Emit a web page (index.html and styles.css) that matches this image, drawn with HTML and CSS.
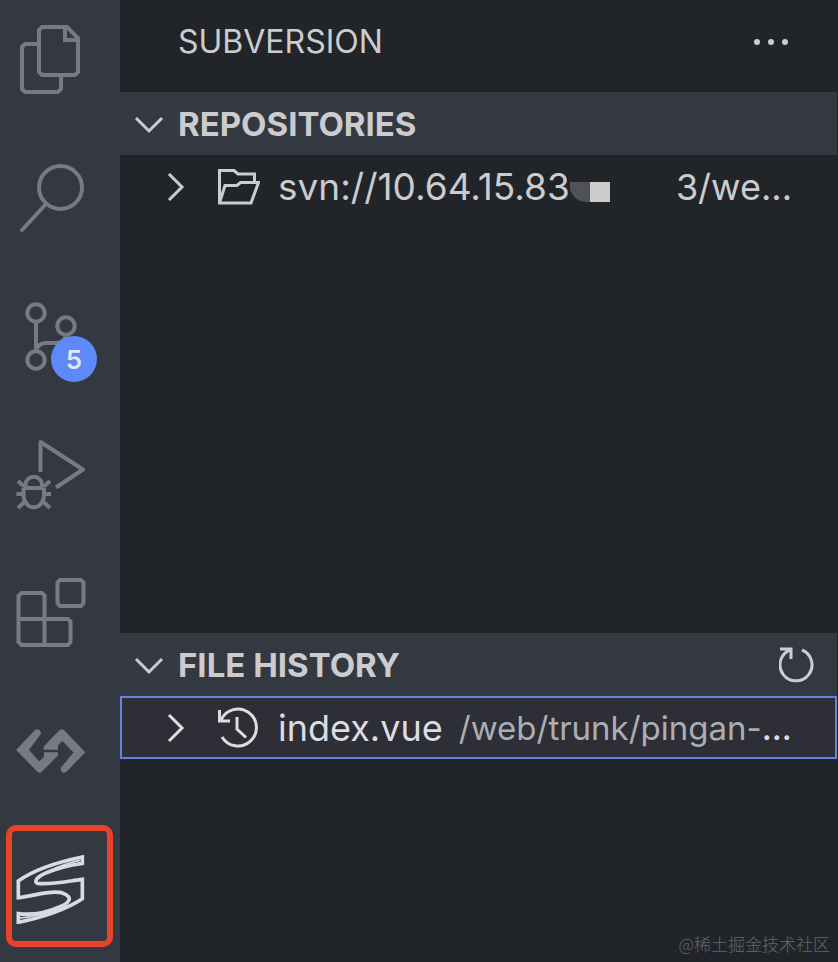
FILE: index.html
```
<!DOCTYPE html>
<html lang="en">
<head>
  <meta charset="UTF-8" />
  <meta name="viewport" content="width=device-width, initial-scale=1.0"/>
  <title>Subversion</title>
  <link rel="stylesheet" href="styles.css">
</head>
<body>

<nav class="activity-bar">
  <button class="activity" aria-label="Explorer">
    <svg viewBox="0 0 72 72">
      <path d="M28 3H53L64 14V48L61 51H28L25 48V6ZM51 3V16H64"/>
      <path d="M25 20H11L8 23V65L11 68H44L47 65V51"/>
    </svg>
  </button>
  <button class="activity" aria-label="Search">
    <svg viewBox="0 0 72 72">
      <circle cx="46.5" cy="25.5" r="21.5"/>
      <path d="M32 42L8 68" stroke-linecap="round"/>
    </svg>
  </button>
  <button class="activity" aria-label="Source Control">
    <svg viewBox="0 0 72 72">
      <circle cx="22" cy="13" r="8.7"/>
      <circle cx="52" cy="26" r="8.7"/>
      <circle cx="22" cy="60" r="8.7"/>
      <path d="M22 22V51M22 50Q25 43 32 43H42Q51 43 52 35"/>
    </svg>
    <span class="badge">5</span>
  </button>
  <button class="activity" aria-label="Run and Debug">
    <svg viewBox="0 0 72 72">
      <path d="M26.5 34V4L69 31.5L42 49.5" stroke-linejoin="round"/>
      <path d="M9.5 50H30M9.5 50V57a10 12 0 0 0 20.5 0V50M11.5 50V47a8 8 0 0 1 16.5 0V50"/>
      <path d="M2.5 56H10M30 56H37M4 43L10 48.5M36 43L30 48.5M4 70L11 63.5M36 70L29 63.5"/>
    </svg>
  </button>
  <button class="activity" aria-label="Extensions">
    <svg viewBox="0 0 72 72">
      <path d="M7.5 17H28L30.5 19.5V43H54L56.5 45.5V66L54 69H7.5L4.5 66V20ZM4.5 43H30.5V69"/>
      <path d="M46 4H67L69.5 6.5V27L67 30H46L43.5 27V6.5Z"/>
    </svg>
  </button>
  <button class="activity" aria-label="Code links">
    <svg class="solid" viewBox="42 462 216 216">
      <path d="M51 570L107 511Q120 507 121 521L84 570L118 607L134 591V579H172V586L125 633Q120 640 113 633Z"/>
      <path d="M253 577L197 635Q184 640 184 625L223 577L187 540L172 555V567H133V560L179 513Q185 507 192 513Z"/>
    </svg>
  </button>
  <button class="activity active" aria-label="Subversion">
    <svg class="svn-logo" viewBox="42 126 216 216">
      <path d="M247 141C180 155 100 180 55 213V263C100 259 145 240 185 248C225 262 205 280 180 290C140 308 95 316 55 311V337C130 321 200 297 247 266V208C200 214 150 225 112 220C90 207 150 174 247 160Z"/>
      <path d="M240 151C215 157 190 164 164 175M60 324Q105 320 145 306" stroke-width="5"/>
    </svg>
  </button>
</nav>

<main class="sidebar">
  <header class="title-bar">
    <h1>SUBVERSION</h1>
    <button class="more" aria-label="More actions">
      <svg viewBox="0 0 36 8"><circle cx="4" cy="4" r="3"/><circle cx="18" cy="4" r="3"/><circle cx="32" cy="4" r="3"/></svg>
    </button>
  </header>

  <section class="repositories">
    <div class="section-header">
      <button class="toggle">
        <svg class="chevron" viewBox="0 0 48 48"><path d="M11 18L24 31L37 18"/></svg>
        <span>REPOSITORIES</span>
      </button>
    </div>
    <button class="row">
      <svg class="chevron" viewBox="0 0 48 48"><path d="M17 11L30 24L17 37"/></svg>
      <svg class="icon" viewBox="0 0 42 42">
        <path d="M1.5 37V4.500H16L20 8H36.5V16M1.5 37L7 19.5H19L22.5 16.5H40.5L33 37Z"/>
      </svg>
      <span class="url">svn://10.64.15.83</span>
      <svg class="mask" viewBox="0 0 40 30">
        <path d="M0 10H20V30H16Q5 30 0 18Z" fill="#505256"/>
        <rect x="20" y="10" width="20" height="20" fill="#cccccd"/>
      </svg>
      <span class="rest">3/we...</span>
    </button>
  </section>

  <section class="history">
    <div class="section-header">
      <button class="toggle">
        <svg class="chevron" viewBox="0 0 48 48"><path d="M11 18L24 31L37 18"/></svg>
        <span>FILE HISTORY</span>
      </button>
      <button class="refresh" aria-label="Refresh">
        <svg viewBox="0 0 36 36"><path d="M1 2H12V12M11 3A16 16 0 1 0 23 3"/></svg>
      </button>
    </div>
    <button class="row selected">
      <svg class="chevron" viewBox="0 0 48 48"><path d="M17 11L30 24L17 37"/></svg>
      <svg class="icon" viewBox="0 0 42 42">
        <path d="M1.5 3V14H12M3 13A18.5 18.5 0 1 1 4 30M19 10V22L28 30.5"/>
      </svg>
      <span>index.vue</span>
      <span class="path">/web/trunk/pingan-<b>...</b></span>
    </button>
  </section>
</main>

<div class="watermark">@稀土掘金技术社区</div>

</body>
</html>
```
FILE: styles.css
```
* {
  box-sizing: border-box;
}

body {
  position: relative;
  display: flex;
  min-height: 100vh;
  margin: 0;
  background: #212529;
  color: #cccccf;
  font-family: Inter, "Noto Sans CJK SC", sans-serif;
}

button {
  padding: 0;
  border: none;
  background: none;
  color: inherit;
  font: inherit;
  cursor: pointer;
}

svg {
  display: block;
  flex: none;
  fill: none;
  stroke: currentColor;
}

.activity-bar {
  display: flex;
  flex-direction: column;
  flex: none;
  gap: 18px;
  width: 120px;
  background: #343841;
  color: #777a82;
}

.activity {
  position: relative;
  height: 120px;
  padding-left: 14px;
}

.activity svg {
  width: 72px;
  height: 72px;
  stroke-width: 4;
}

.activity .solid {
  fill: currentColor;
}

.badge {
  position: absolute;
  top: 60px;
  left: 51px;
  width: 46px;
  height: 46px;
  border-radius: 50%;
  background: #5d8af8;
  color: #e2e7f5;
  font-size: 26px;
  font-weight: 600;
  line-height: 47px;
  text-align: center;
}

.active {
  color: #d9dbe2;
}

.activity .svn-logo {
  stroke-width: 11;
}

.active::after {
  content: "";
  position: absolute;
  inset: -3px 7px 1px 6px;
  border: 6px solid #e8422a;
  border-radius: 10px;
}

.sidebar {
  display: flex;
  flex-direction: column;
  flex: 1;
  min-width: 0;
  padding-right: 1px;
}

.title-bar {
  display: flex;
  align-items: center;
  justify-content: space-between;
  height: 92px;
  padding: 0 48px 9px 58px;
}

h1 {
  margin: 0;
  font-size: 32px;
  font-weight: 400;
}

.more svg {
  width: 36px;
  height: 8px;
  fill: currentColor;
  stroke: none;
}

.repositories {
  flex: 1;
}

.history {
  min-height: 329px;
}

.section-header {
  display: flex;
  align-items: center;
  justify-content: space-between;
  height: 63px;
  padding: 0 22px 0 5px;
  background: #343841;
}

.toggle {
  display: flex;
  align-items: center;
  gap: 5px;
  font-size: 33px;
  font-weight: 700;
}

.chevron {
  width: 48px;
  height: 48px;
  stroke-width: 3;
}

.refresh svg {
  width: 36px;
  height: 36px;
  stroke-width: 3;
}

.row {
  display: flex;
  align-items: center;
  width: 100%;
  height: 63px;
  padding: 0 30px;
  border: 2px solid transparent;
  font-size: 36px;
  text-align: left;
  white-space: nowrap;
}

.row .icon {
  width: 42px;
  height: 42px;
  margin: 0 18px;
  stroke-width: 3;
}

.url {
  font-size: 37px;
}

.mask {
  width: 40px;
  height: 30px;
  stroke: none;
}

.rest {
  margin-left: 66px;
}

.selected {
  border-color: #5f86dc;
  background: #2d2e36;
  color: #dcdde3;
}

.path {
  margin-left: 16px;
  color: #acaeb6;
  font-size: 33px;
}

.path b {
  color: #dcdde3;
  font-weight: 500;
}

.watermark {
  position: absolute;
  right: 8px;
  bottom: 6px;
  color: #63666a;
  font-family: "Noto Sans CJK SC", sans-serif;
  font-size: 17px;
  font-weight: 300;
  line-height: 24px;
}
```
